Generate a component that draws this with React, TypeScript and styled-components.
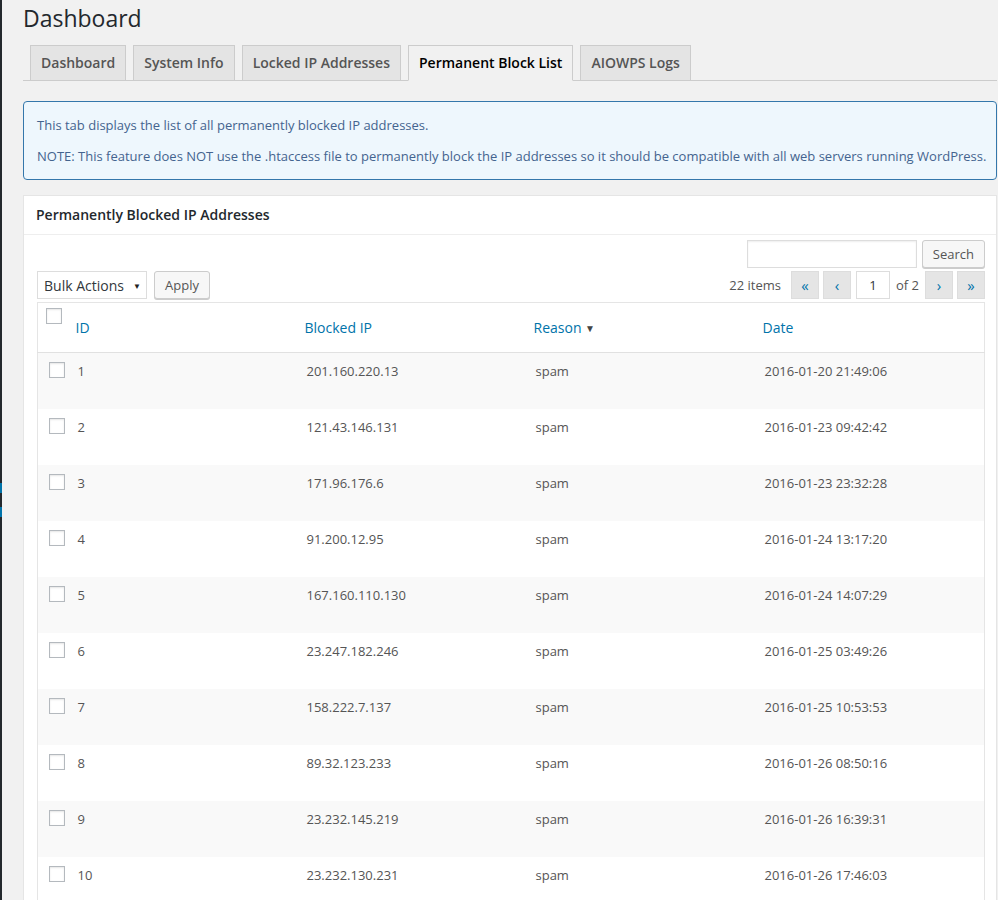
import React from "react";
import styled, { createGlobalStyle } from "styled-components";

const GlobalStyle = createGlobalStyle`
  html, body {
    margin: 0;
    padding: 0;
    background: #f1f1f1;
  }
  body {
    font-family: "Open Sans", "Liberation Sans", sans-serif;
    font-size: 13px;
    color: #444;
  }
  * {
    box-sizing: border-box;
  }
`;

const rows = [
  { id: 1, ip: "201.160.220.13", date: "2016-01-20 21:49:06" },
  { id: 2, ip: "121.43.146.131", date: "2016-01-23 09:42:42" },
  { id: 3, ip: "171.96.176.6", date: "2016-01-23 23:32:28" },
  { id: 4, ip: "91.200.12.95", date: "2016-01-24 13:17:20" },
  { id: 5, ip: "167.160.110.130", date: "2016-01-24 14:07:29" },
  { id: 6, ip: "23.247.182.246", date: "2016-01-25 03:49:26" },
  { id: 7, ip: "158.222.7.137", date: "2016-01-25 10:53:53" },
  { id: 8, ip: "89.32.123.233", date: "2016-01-26 08:50:16" },
  { id: 9, ip: "23.232.145.219", date: "2016-01-26 16:39:31" },
  { id: 10, ip: "23.232.130.231", date: "2016-01-26 17:46:03" },
];

const tabs = [
  "Dashboard",
  "System Info",
  "Locked IP Addresses",
  "Permanent Block List",
  "AIOWPS Logs",
];

const App = () => {
  return (
    <Page>
      <GlobalStyle />
      <MenuEdge>
        <MenuMark $top={483} />
        <MenuMark $top={14} />
      </MenuEdge>
      <Wrap>
        <Title>Dashboard</Title>
        <TabBar>
          {tabs.map((t) => (
            <Tab key={t} $active={t === "Permanent Block List"}>
              {t}
            </Tab>
          ))}
        </TabBar>

        <InfoBox>
          <p>This tab displays the list of all permanently blocked IP addresses.</p>
          <p>
            NOTE: This feature does NOT use the .htaccess file to permanently
            block the IP addresses so it should be compatible with all web
            servers running WordPress.
          </p>
        </InfoBox>

        <Panel>
          <PanelHead>Permanently Blocked IP Addresses</PanelHead>
          <PanelBody>
            <SearchRow>
              <TextInput $width={170} />
              <Button>Search</Button>
            </SearchRow>
            <NavRow>
              <Actions>
                <FakeSelect>
                  <span>Bulk Actions</span>
                  <Caret>▼</Caret>
                </FakeSelect>
                <Button>Apply</Button>
              </Actions>
              <Pager>
                <Count>22 items</Count>
                <PageBtn>«</PageBtn>
                <PageBtn>‹</PageBtn>
                <PageInput>1</PageInput>
                <OfText>of 2</OfText>
                <PageBtn>›</PageBtn>
                <PageBtn>»</PageBtn>
              </Pager>
            </NavRow>

            <Table>
              <colgroup>
                <col style={{ width: 30 }} />
                <col style={{ width: 229 }} />
                <col style={{ width: 229 }} />
                <col style={{ width: 229 }} />
                <col />
              </colgroup>
              <thead>
                <tr>
                  <HeadCheck>
                    <Box />
                  </HeadCheck>
                  <Th>ID</Th>
                  <Th>Blocked IP</Th>
                  <Th>
                    Reason <SortArrow>▼</SortArrow>
                  </Th>
                  <Th>Date</Th>
                </tr>
              </thead>
              <tbody>
                {rows.map((r, i) => (
                  <Row key={r.id} $alt={i % 2 === 0}>
                    <CheckCell>
                      <Box />
                    </CheckCell>
                    <Td>{r.id}</Td>
                    <Td>{r.ip}</Td>
                    <Td>spam</Td>
                    <Td>{r.date}</Td>
                  </Row>
                ))}
              </tbody>
            </Table>
          </PanelBody>
        </Panel>
      </Wrap>
    </Page>
  );
};

const Page = styled.div`
  display: flex;
  min-height: 100vh;
`;

const MenuEdge = styled.div`
  width: 2px;
  flex: none;
  background: #23282d;
`;

const MenuMark = styled.div<{ $top: number }>`
  margin-top: ${(p) => p.$top}px;
  height: 10px;
  background: #0073aa;
`;

const Wrap = styled.div`
  flex: 1;
  padding: 0 1px 0 21px;
`;

const Title = styled.h1`
  margin: 0;
  padding: 4px 0 0;
  font-size: 23px;
  line-height: 29px;
  font-weight: 400;
  color: #23282d;
`;

const TabBar = styled.div`
  display: flex;
  gap: 7px;
  margin-top: 12px;
  padding-left: 7px;
  border-bottom: 1px solid #ccc;
`;

const Tab = styled.div<{ $active?: boolean }>`
  margin-bottom: -1px;
  padding: 5px 10px;
  font-size: 14px;
  line-height: 24px;
  font-weight: 600;
  border: 1px solid #ccc;
  background: ${(p) => (p.$active ? "#f1f1f1" : "#e4e4e4")};
  border-bottom-color: ${(p) => (p.$active ? "#f1f1f1" : "#ccc")};
  color: ${(p) => (p.$active ? "#000" : "#555")};
`;

const InfoBox = styled.div`
  margin-top: 20px;
  padding: 1px 4px 1px 13px;
  background: #eef7fd;
  border: 1px solid #3477ab;
  border-radius: 4px;
  color: #44648f;
  font-size: 13px;
  line-height: 18px;
  p {
    margin: 13px 0;
  }
`;

const Panel = styled.div`
  margin-top: 15px;
  background: #fff;
  border: 1px solid #e5e5e5;
`;

const PanelHead = styled.h3`
  margin: 0;
  padding: 10px 12px;
  font-size: 14px;
  line-height: 18px;
  font-weight: 600;
  color: #23282d;
  border-bottom: 1px solid #eee;
`;

const PanelBody = styled.div`
  padding: 5px 11px 20px 13px;
`;

const SearchRow = styled.div`
  display: flex;
  justify-content: flex-end;
  gap: 5px;
`;

const TextInput = styled.div<{ $width: number }>`
  width: ${(p) => p.$width}px;
  height: 28px;
  background: #fff;
  border: 1px solid #ddd;
  box-shadow: inset 0 1px 2px rgba(0, 0, 0, 0.07);
`;

const Button = styled.div`
  display: flex;
  align-items: center;
  height: 28px;
  padding: 0 10px;
  font-size: 13px;
  color: #555;
  background: #f7f7f7;
  border: 1px solid #ccc;
  border-radius: 3px;
  box-shadow: 0 1px 0 #ccc;
`;

const NavRow = styled.div`
  display: flex;
  justify-content: space-between;
  align-items: center;
  margin-top: 3px;
  margin-bottom: 3px;
`;

const Actions = styled.div`
  display: flex;
  gap: 7px;
`;

const FakeSelect = styled.div`
  display: flex;
  align-items: center;
  justify-content: space-between;
  width: 110px;
  height: 28px;
  padding: 0 5px 0 6px;
  font-size: 14px;
  color: #32373c;
  background: #fff;
  border: 1px solid #ddd;
`;

const Caret = styled.span`
  font-size: 8px;
  color: #222;
`;

const Pager = styled.div`
  display: flex;
  align-items: center;
  gap: 4px;
`;

const Count = styled.span`
  margin-right: 6px;
  font-size: 13px;
  color: #555;
`;

const PageBtn = styled.div`
  display: flex;
  align-items: center;
  justify-content: center;
  width: 28px;
  height: 28px;
  font-size: 15px;
  color: #0073aa;
  background: #e5e5e5;
  border: 1px solid #ddd;
`;

const PageInput = styled.div`
  display: flex;
  align-items: center;
  justify-content: center;
  width: 34px;
  height: 28px;
  margin-left: 1px;
  font-size: 13px;
  color: #32373c;
  background: #fff;
  border: 1px solid #ddd;
`;

const OfText = styled.span`
  margin: 0 2px;
  font-size: 13px;
  color: #555;
`;

const Table = styled.table`
  width: 100%;
  table-layout: fixed;
  border-collapse: collapse;
  background: #fff;
  border: 1px solid #e5e5e5;
`;

const Th = styled.th`
  height: 50px;
  padding: 0 8px;
  text-align: left;
  vertical-align: middle;
  font-size: 14px;
  font-weight: 400;
  color: #0073aa;
  border-bottom: 1px solid #e1e1e1;
`;

const HeadCheck = styled.th`
  height: 50px;
  padding: 5px 0 0 8px;
  vertical-align: top;
  border-bottom: 1px solid #e1e1e1;
`;

const SortArrow = styled.span`
  font-size: 10px;
  color: #444;
  position: relative;
  top: -1px;
`;

const Row = styled.tr<{ $alt?: boolean }>`
  background: ${(p) => (p.$alt ? "#f9f9f9" : "#fff")};
`;

const Td = styled.td`
  height: 56px;
  padding: 9px 10px 7px;
  vertical-align: top;
  font-size: 13px;
  line-height: 18px;
  color: #555;
`;

const CheckCell = styled.td`
  height: 56px;
  padding: 9px 0 0 11px;
  vertical-align: top;
`;

const Box = styled.div`
  width: 16px;
  height: 16px;
  background: #fff;
  border: 1px solid #b4b9be;
  box-shadow: inset 0 1px 2px rgba(0, 0, 0, 0.1);
`;

export default App;
